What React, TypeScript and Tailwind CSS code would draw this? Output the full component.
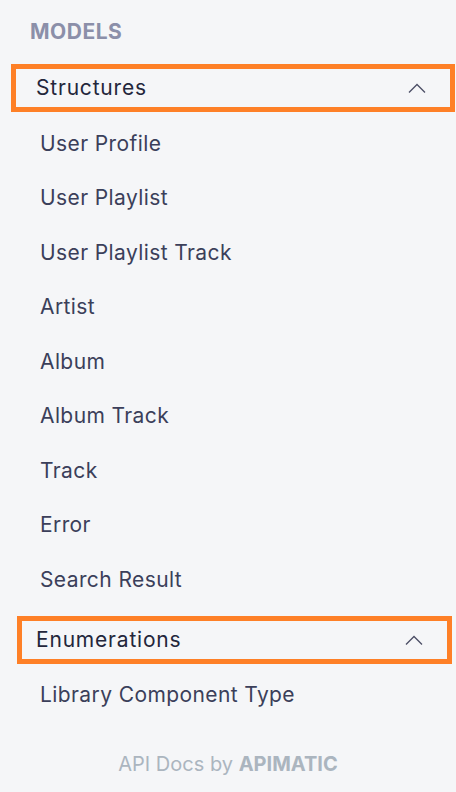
import React from "react";

const Chevron = () => (
  <svg width="18" height="10" viewBox="0 0 18 10" fill="none" className="shrink-0">
    <polyline points="1,9.5 9,1.5 17,9.5" stroke="#4b4e66" strokeWidth="1.3" />
  </svg>
);

const GroupHeader = ({ title, className }: { title: string; className: string }) => (
  <div
    className={`flex items-center justify-between h-[48px] border-[5px] border-[#fe8027] pr-[24px] ${className}`}
  >
    <span className="text-[21px] tracking-[0.8px] text-[#23263b]">{title}</span>
    <Chevron />
  </div>
);

const Item = ({ name }: { name: string }) => (
  <div className="flex items-center h-[54.5px] pl-[40px] text-[21px] tracking-[0.4px] text-[#3b3f5a]">
    {name}
  </div>
);

const App = () => {
  const structures = [
    "User Profile",
    "User Playlist",
    "User Playlist Track",
    "Artist",
    "Album",
    "Album Track",
    "Track",
    "Error",
    "Search Result",
  ];

  return (
    <div
      className="w-[456px] h-[792px] bg-[#f5f6f8] overflow-hidden"
      style={{ fontFamily: "Inter, 'Noto Sans', sans-serif" }}
    >
      <div className="pt-[16px] pl-[30px] h-[64px]">
        <span className="text-[21px] font-bold text-[#8b8fa9] tracking-[0.5px]">MODELS</span>
      </div>

      <GroupHeader title="Structures" className="ml-[11px] mr-[1px] pl-[20px]" />
      <div className="pt-[4px]">
        {structures.map((s) => (
          <Item key={s} name={s} />
        ))}
      </div>

      <GroupHeader title="Enumerations" className="mt-[9px] ml-[17px] mr-[4px] pl-[14px]" />
      <div className="pt-[4px]">
        <Item name="Library Component Type" />
      </div>

      <div className="mt-[27px] text-center text-[20px] text-[#abb5bf]">
        API Docs by <span className="font-bold">APIMATIC</span>
      </div>
    </div>
  );
};

export default App;
